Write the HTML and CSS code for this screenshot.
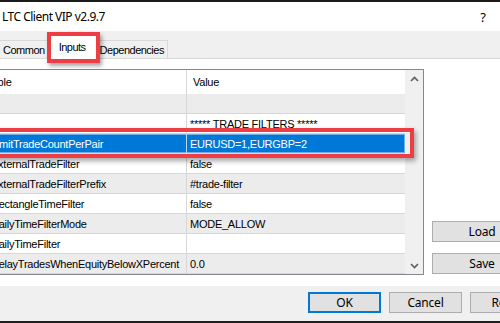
FILE: index.html
```html
<!DOCTYPE html>
<html>
<head>
  <title>LTC Client VIP v2.9.7</title>
  <link rel="stylesheet" href="styles.css">
</head>
<body>
  <div class="topline"></div>
  <div class="dialog">
    <div class="titlebar">
      <span class="title">LTC Client VIP v2.9.7</span>
      <span class="help">?</span>
      <span class="close"></span>
    </div>

    <div class="tabs">
      <div class="tab">Common</div>
      <div class="tab selected marked">Inputs</div>
      <div class="tab">Dependencies</div>
    </div>

    <div class="panel">
      <div class="grid">
        <div class="grid-body">
          <div class="row header">
            <div class="cell name"><span class="label">Variable</span></div>
            <div class="cell value">Value</div>
          </div>
          <div class="row alt">
            <div class="cell name"></div>
            <div class="cell value"></div>
          </div>
          <div class="row">
            <div class="cell name"></div>
            <div class="cell value">***** TRADE FILTERS *****</div>
          </div>
          <div class="row current marked">
            <div class="cell name">LimitTradeCountPerPair</div>
            <div class="cell value">EURUSD=1,EURGBP=2</div>
          </div>
          <div class="row">
            <div class="cell name">ExternalTradeFilter</div>
            <div class="cell value">false</div>
          </div>
          <div class="row alt">
            <div class="cell name">ExternalTradeFilterPrefix</div>
            <div class="cell value">#trade-filter</div>
          </div>
          <div class="row">
            <div class="cell name">RectangleTimeFilter</div>
            <div class="cell value">false</div>
          </div>
          <div class="row alt">
            <div class="cell name">DailyTimeFilterMode</div>
            <div class="cell value">MODE_ALLOW</div>
          </div>
          <div class="row">
            <div class="cell name">DailyTimeFilter</div>
            <div class="cell value"></div>
          </div>
          <div class="row alt">
            <div class="cell name">DelayTradesWhenEquityBelowXPercent</div>
            <div class="cell value">0.0</div>
          </div>
        </div>
        <div class="scrollbar">
          <svg width="9" height="6" viewBox="0 0 9 6"><path d="M1 5 L4.5 1.5 L8 5" fill="none" stroke="#5f5f55" stroke-width="1.6"/></svg>
          <svg width="9" height="6" viewBox="0 0 9 6"><path d="M1 1 L4.5 4.5 L8 1" fill="none" stroke="#5f5f55" stroke-width="1.6"/></svg>
        </div>
      </div>

      <div class="side">
        <button class="button">Load</button>
        <button class="button">Save</button>
      </div>
    </div>

    <div class="footer">
      <button class="button default">OK</button>
      <button class="button">Cancel</button>
      <button class="button">Reset</button>
    </div>
  </div>
  <div class="bottomline"></div>
</body>
</html>
```

FILE: styles.css
```css
body {
  margin: 0;
  width: 500px;
  height: 323px;
  overflow: hidden;
  background-color: white;
  font-family: "Noto Sans", "Liberation Sans", sans-serif;
  font-size: 12px;
  color: #000;
}

.topline {
  height: 2px;
  background-color: #1a1a1a;
}

.bottomline {
  height: 2px;
  background-color: #1f1f1f;
}

.dialog {
  width: 570px;
  margin-left: -14px;
}

.titlebar {
  height: 29px;
  display: flex;
  align-items: center;
  padding-left: 16px;
  background-color: white;
}

.title {
  font-size: 12px;
  letter-spacing: -0.5px;
}

.help {
  margin-left: auto;
  width: 30px;
  text-align: center;
  font-size: 13px;
}

.close {
  width: 58px;
}

.tabs {
  height: 27px;
  display: flex;
  align-items: flex-end;
  padding-left: 13px;
  background-color: #f0f0f0;
  border-bottom: 1px solid #d9d9d9;
}

.tab {
  height: 18px;
  line-height: 19px;
  padding: 0 3px;
  border: 1px solid #d9d9d9;
  border-bottom: none;
  background-color: #f0f0f0;
  font-family: "Liberation Sans", Arial, sans-serif;
  font-size: 11px;
  letter-spacing: -0.5px;
  box-sizing: border-box;
}

.tab.selected {
  position: relative;
  height: 25px;
  line-height: 25px;
  padding: 0 11px;
  margin: 0 -2px -1px -2px;
  background-color: white;
  z-index: 1;
}

.tab.marked::after {
  content: "";
  position: absolute;
  top: -3px;
  bottom: -4px;
  left: -1px;
  right: -3px;
  border: 4px solid #ee3e45;
  box-shadow: 2px 3px 4px rgba(0, 0, 0, 0.35);
}

.panel {
  display: flex;
  height: 227px;
  padding-top: 10px;
  box-sizing: border-box;
  background-color: white;
}

.grid {
  display: flex;
  width: 438px;
  height: 206px;
  border: 1px solid #828790;
  box-sizing: border-box;
  font-family: "Liberation Sans", Arial, sans-serif;
  font-size: 11px;
  letter-spacing: -0.25px;
}

.grid-body {
  flex: 1;
}

.row {
  display: flex;
  height: 20px;
  border-bottom: 1px solid #d7d7d7;
  box-sizing: border-box;
  background-color: white;
}

.row.header {
  height: 24px;
  border-bottom: none;
}

.row.alt {
  background-color: #ececec;
}

.cell {
  display: flex;
  align-items: center;
  white-space: nowrap;
  overflow: hidden;
}

.cell.name {
  width: 200px;
  padding-left: 4px;
  border-right: 1px solid #d7d7d7;
  box-sizing: border-box;
}

.cell.value {
  flex: 1;
  padding-left: 3px;
}

.row.header .cell.name {
  padding-left: 0;
}

.row.header .label {
  margin-left: -13px;
}

.row.header .cell.value {
  padding-left: 6px;
}

.row.current {
  position: relative;
  z-index: 2;
  background-color: #0078d7;
  color: white;
  box-shadow: inset 0 0 0 1px #6fb0e8;
}

.row.current .cell.name {
  border-right-color: #b9d8f3;
}

.row.marked::after {
  content: "";
  position: absolute;
  top: -6px;
  bottom: -5px;
  left: -6px;
  right: -9px;
  border: 4px solid #ee3e45;
  box-shadow: 2px 3px 5px rgba(0, 0, 0, 0.35);
}

.scrollbar {
  width: 18px;
  display: flex;
  flex-direction: column;
  justify-content: space-between;
  align-items: center;
  padding: 6px 0 5px;
  box-sizing: border-box;
  background-color: #f0f0f0;
}

.side {
  display: flex;
  flex-direction: column;
  justify-content: flex-end;
  gap: 11px;
  margin-left: 8px;
  height: 206px;
  padding-bottom: 1px;
  box-sizing: border-box;
}

.button {
  width: 100px;
  height: 21px;
  padding: 0;
  background-color: #e1e1e1;
  border: 1px solid #adadad;
  font-family: "Noto Sans", "Liberation Sans", sans-serif;
  font-size: 12px;
  letter-spacing: -0.2px;
  color: #000;
}

.footer {
  height: 35px;
  display: flex;
  justify-content: flex-end;
  align-items: flex-start;
  gap: 8px;
  padding: 6px 13px 0 0;
  box-sizing: border-box;
  background-color: #f0f0f0;
}

.footer .button {
  width: 73px;
}

.button.default {
  border: 2px solid #0078d7;
}
```
